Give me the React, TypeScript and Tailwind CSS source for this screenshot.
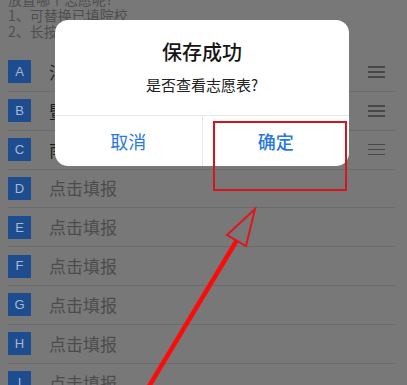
const rows = [
    { letter: "A", name: "汕头大学" },
    { letter: "B", name: "暨南大学" },
    { letter: "C", name: "南方医科大学" },
    { letter: "D", name: "" },
    { letter: "E", name: "" },
    { letter: "F", name: "" },
    { letter: "G", name: "" },
    { letter: "H", name: "" },
    { letter: "I", name: "" },
];

const font = { fontFamily: '"Noto Sans CJK SC", "Liberation Sans", sans-serif' };

const DragHandle = () => (
    <div className="flex flex-col gap-[3.5px] w-[17px]">
        <span className="h-[1.5px] bg-[#474747]" />
        <span className="h-[1.5px] bg-[#474747]" />
        <span className="h-[1.5px] bg-[#474747]" />
    </div>
);

export default function App() {
    return (
        <div className="relative w-[407px] h-[385px] overflow-hidden bg-[#787878]" style={font}>
            {/* page, scrolled a little */}
            <div className="-mt-[9px] h-[62px] px-[8px] text-[14px] leading-[16px] text-[#4f4f4f] overflow-hidden">
                <p className="h-[16px]">放置哪个志愿呢?</p>
                <p className="h-[16px]">1、可替换已填院校</p>
                <p className="h-[16px]">2、长按拖动可调整顺序</p>
            </div>

            <ul className="ml-[8px] mr-[12px]">
                {rows.map((r) => (
                    <li key={r.letter} className="flex items-center h-[38.85px] border-b border-[#6b6b6b]">
                        <div className="w-[23px] h-[23px] flex items-center justify-center bg-[#1e4d8f] text-[#aab7cf] text-[13px]" style={{ fontFamily: '"Liberation Sans", sans-serif' }}>
                            {r.letter}
                        </div>
                        {r.name ? (
                            <span className="ml-[18px] flex-1 text-[17px] leading-[24px] text-[#1f1f1f]">{r.name}</span>
                        ) : (
                            <span className="ml-[18px] flex-1 text-[17px] leading-[24px] text-[#4c4c4c]">点击填报</span>
                        )}
                        {r.name && (
                            <div className="mr-[10px]">
                                <DragHandle />
                            </div>
                        )}
                    </li>
                ))}
            </ul>

            {/* alert */}
            <div className="absolute left-[55px] top-[20px] w-[294px] bg-white rounded-[13px] overflow-hidden">
                <div className="pt-[20px] pb-[20px] flex flex-col items-center">
                    <h2 className="text-[20px] leading-[24px] font-medium text-[#161616]">保存成功</h2>
                    <p className="mt-[10px] text-[15px] leading-[21px] text-[#222]">是否查看志愿表?</p>
                </div>
                <div className="flex h-[51px] border-t border-[#e6e6e6]">
                    <button className="flex-1 flex items-center justify-center text-[18px] text-[#2a79e2] border-r border-[#e6e6e6]">取消</button>
                    <button className="flex-1 flex items-center justify-center text-[18px] font-medium text-[#2a79e2]">确定</button>
                </div>
            </div>

            {/* annotation */}
            <svg className="absolute inset-0 pointer-events-none" width="407" height="385" viewBox="0 0 407 385">
                <rect x="214" y="122" width="132" height="68" fill="none" stroke="#d4161c" strokeWidth="2" />
                <line x1="148" y1="388" x2="237" y2="240" stroke="#ff0a0a" strokeWidth="4.5" />
                <polygon points="255,209 227,235 246,246" fill="none" stroke="#e3141c" strokeWidth="2" strokeLinejoin="miter" />
            </svg>
        </div>
    );
}
